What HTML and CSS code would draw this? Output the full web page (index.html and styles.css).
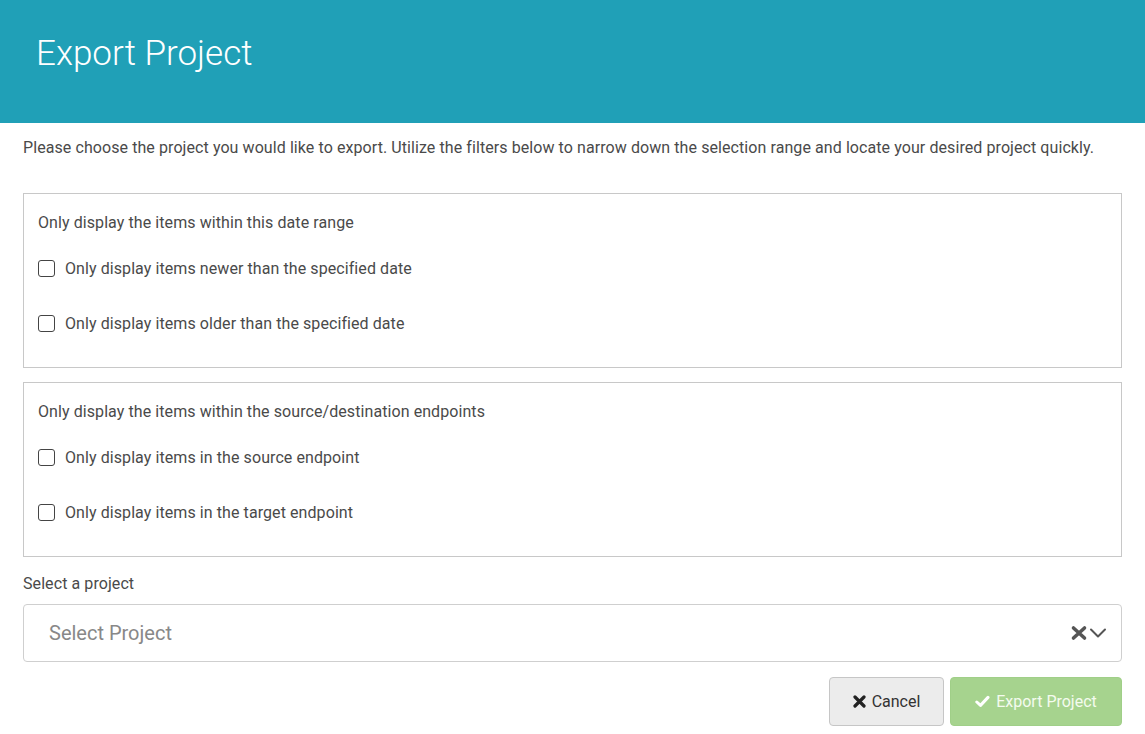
FILE: index.html
```html
<!DOCTYPE html>
<html lang="en">
  <head>
    <meta charset="UTF-8" />
    <title>Export Project</title>
    <link rel="stylesheet" href="styles.css">
  </head>
  <body>
    <div class="header">
      <h1 class="title">Export Project</h1>
    </div>

    <div class="content">
      <p class="intro">Please choose the project you would like to export. Utilize the filters below to narrow down the selection range and locate your desired project quickly.</p>

      <div class="filter-box">
        <p class="filter-title">Only display the items within this date range</p>
        <label class="check-row">
          <input type="checkbox" class="check">
          <span>Only display items newer than the specified date</span>
        </label>
        <label class="check-row">
          <input type="checkbox" class="check">
          <span>Only display items older than the specified date</span>
        </label>
      </div>

      <div class="filter-box">
        <p class="filter-title">Only display the items within the source/destination endpoints</p>
        <label class="check-row">
          <input type="checkbox" class="check">
          <span>Only display items in the source endpoint</span>
        </label>
        <label class="check-row">
          <input type="checkbox" class="check">
          <span>Only display items in the target endpoint</span>
        </label>
      </div>

      <p class="select-label">Select a project</p>
      <div class="select-box">
        <span class="placeholder">Select Project</span>
        <span class="select-icons">
          <svg width="18" height="18" viewBox="0 0 18 18" class="clear-icon">
            <path d="M3.5 4 L14.5 14 M14.5 4 L3.5 14" stroke="#555" stroke-width="3.6" stroke-linecap="round"/>
          </svg>
          <svg width="18" height="16" viewBox="0 0 18 16" class="arrow-icon">
            <path d="M2 4.5 L9 11.5 L16 4.5" stroke="#555" stroke-width="2" fill="none" stroke-linecap="round" stroke-linejoin="round"/>
          </svg>
        </span>
      </div>

      <div class="actions">
        <button class="cancel-button">
          <svg width="13" height="13" viewBox="0 0 13 13">
            <path d="M2 2 L11 11 M11 2 L2 11" stroke="#222" stroke-width="3.2" stroke-linecap="round"/>
          </svg>
          Cancel
        </button>
        <button class="export-button">
          <svg width="15" height="13" viewBox="0 0 15 13">
            <path d="M1.8 7 L5.5 10.4 L13 2.4" stroke="#fff" stroke-width="3" fill="none" stroke-linecap="round" stroke-linejoin="round"/>
          </svg>
          Export Project
        </button>
      </div>
    </div>
  </body>
</html>
```

FILE: styles.css
```css
body{
  margin: 0;
  background-color: white;
  font-family: Roboto, "Liberation Sans", Arial, sans-serif;
  color: #4a4a4a;
  letter-spacing: 0.08px;
}
.header{
  background-color: #20a0b7;
  height: 123px;
  padding: 0 36px;
  display: flex;
  align-items: center;
}
.title{
  margin: 0 0 17px 0;
  color: white;
  font-size: 35px;
  font-weight: 300;
  letter-spacing: 0;
}
.content{
  padding: 0 23px;
}
.intro{
  font-size: 16px;
  margin: 15px 0 0 0;
  line-height: 20px;
}
.filter-box{
  border: 1px solid #c8c8c8;
  padding: 19px 14px 34px 14px;
  margin-top: 14px;
}
.intro + .filter-box{
  margin-top: 35px;
}
.filter-title{
  font-size: 16px;
  margin: 0 0 25px 0;
  line-height: 20px;
}
.check-row{
  display: flex;
  align-items: center;
  font-size: 16px;
  height: 20px;
  margin-bottom: 35px;
}
.check-row:last-child{
  margin-bottom: 0;
}
.check{
  appearance: none;
  width: 17px;
  height: 17px;
  border: 1.5px solid #444;
  border-radius: 3px;
  margin: 0 10px 0 0;
  background: white;
}
.select-label{
  font-size: 16px;
  margin: 17px 0 0 0;
  line-height: 20px;
}
.select-box{
  margin-top: 10px;
  height: 56px;
  border: 1px solid #cfcfcf;
  border-radius: 4px;
  display: flex;
  align-items: center;
  justify-content: space-between;
  padding: 0 14px 0 25px;
}
.placeholder{
  font-size: 20px;
  color: #888;
  letter-spacing: 0;
}
.select-icons{
  display: flex;
  align-items: center;
  gap: 1px;
}
.actions{
  display: flex;
  justify-content: flex-end;
  gap: 6px;
  margin-top: 15px;
}
.cancel-button, .export-button{
  font-family: Roboto, "Liberation Sans", Arial, sans-serif;
  font-size: 16px;
  height: 49px;
  border-radius: 4px;
  display: flex;
  align-items: center;
  justify-content: center;
  gap: 6px;
  cursor: pointer;
}
.cancel-button{
  width: 115px;
  background-color: #ececec;
  border: 1px solid #c6c6c6;
  color: #333;
}
.export-button{
  width: 172px;
  background-color: #a6d38e;
  border: 1px solid #a0cf88;
  color: #f4fbef;
}
```
